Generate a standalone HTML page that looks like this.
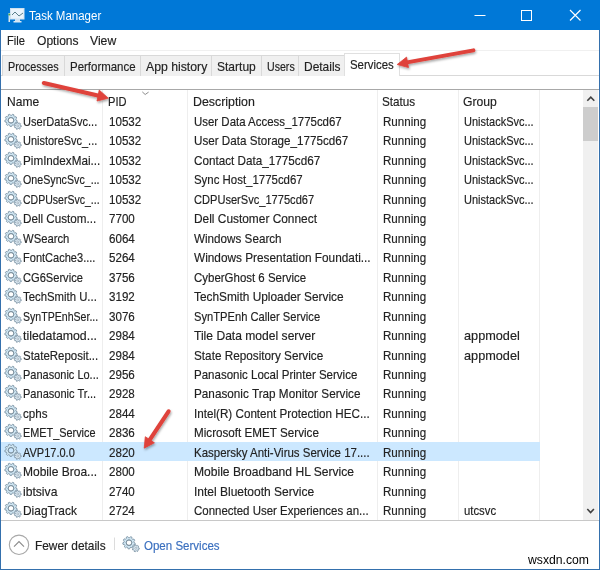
<!DOCTYPE html>
<html><head><meta charset="utf-8">
<style>
*{margin:0;padding:0;box-sizing:border-box}
html,body{width:600px;height:570px;overflow:hidden;background:#fff}
body{position:relative;font-family:"Liberation Sans",sans-serif;font-size:11.6px;color:#222}
.abs{position:absolute}
.t{display:inline-block;white-space:nowrap;line-height:13px;transform:scaleX(var(--sx,1)) scaleY(1.12);transform-origin:0 80%;-webkit-text-stroke:0.15px currentColor}
#title{position:absolute;left:0;top:0;width:600px;height:30px;background:#0078d7}
#ttl{position:absolute;left:29px;top:10px;color:#fff;font-size:11.5px;-webkit-text-stroke:0}
#bl{position:absolute;left:0;top:30px;width:1px;height:540px;background:#3470ad}
#br{position:absolute;left:599px;top:30px;width:1px;height:540px;background:#3470ad}
#bb{position:absolute;left:0;top:569px;width:600px;height:1px;background:#3470ad}
.menu{position:absolute;top:34.3px}
#mline{position:absolute;left:1px;top:50px;width:598px;height:1px;background:#f0f0f0}
.tab{position:absolute;top:55px;height:21px;background:#f0f0f0;border:1px solid #d9d9d9;border-bottom:none;line-height:13px;padding-left:5px;padding-top:3.6px}
.tab.sel{top:53px;height:23px;background:#fff;padding-top:4.1px;border-color:#e0e0e0}
#tline{position:absolute;left:1px;top:75px;width:598px;height:1px;background:#d9d9d9}
#hline{position:absolute;left:1px;top:89px;width:598px;height:1px;background:#a8a8a8}
.vsep{position:absolute;top:90px;width:1px;height:430px;background:#eeeeee}
.hd{position:absolute;top:95px}
.row{position:absolute;left:1px;width:539px;height:19.42px}
.row.sel{background:#cce8ff;height:18.8px}
.row .t{position:absolute}
.gi{position:absolute;left:2.3px;top:0.5px}
.c0{left:22px} .c1{left:108px} .c2{left:193px} .c3{left:382px} .c4{left:463px}
#sb{position:absolute;left:583px;top:90px;width:15px;height:430px;background:#f0f0f0}
#thumb{position:absolute;left:583px;top:107px;width:15px;height:34px;background:#cdcdcd}
#fline{position:absolute;left:1px;top:520px;width:598px;height:1px;background:#c8c8c8}
#wm{position:absolute;left:528px;top:554px;font-size:12.2px;color:#000;-webkit-text-stroke:0}
#ov{position:absolute;left:0;top:0}
</style></head><body>
<svg width="0" height="0" style="position:absolute">
<defs>
<g id="gear">
<path d="M13.00,7.15 L14.18,7.76 L13.87,9.28 L12.54,9.39 L11.93,10.40 L12.44,11.63 L11.22,12.60 L10.14,11.82 L9.02,12.20 L8.62,13.47 L7.07,13.43 L6.73,12.14 L5.63,11.70 L4.51,12.42 L3.35,11.40 L3.92,10.19 L3.36,9.15 L2.03,8.98 L1.80,7.45 L3.02,6.89 L3.25,5.73 L2.35,4.75 L3.16,3.43 L4.44,3.79 L5.37,3.05 L5.31,1.72 L6.78,1.22 L7.53,2.32 L8.72,2.35 L9.53,1.29 L10.97,1.86 L10.84,3.19 L11.73,3.97 L13.03,3.68 L13.77,5.04 L12.82,5.98Z M10.8,7.3 A2.8,2.8 0 1 0 5.2,7.3 A2.8,2.8 0 1 0 10.8,7.3Z" fill="#cfe6f3" fill-rule="evenodd" stroke="#7f95a6" stroke-width="0.9" stroke-linejoin="round"/>
<circle cx="8" cy="7.3" r="2.8" fill="none" stroke="#7d909c" stroke-width="0.9"/>
<path d="M17.35,12.39 L18.29,12.68 L18.18,13.81 L17.20,13.90 L16.79,14.58 L17.15,15.50 L16.20,16.11 L15.51,15.40 L14.73,15.50 L14.23,16.35 L13.17,15.99 L13.29,15.02 L12.72,14.46 L11.75,14.61 L11.36,13.55 L12.20,13.04 L12.28,12.25 L11.56,11.58 L12.15,10.62 L13.07,10.96 L13.74,10.53 L13.81,9.54 L14.93,9.40 L15.24,10.34 L15.99,10.59 L16.81,10.03 L17.62,10.82 L17.08,11.65Z" fill="#dceaf3" stroke="#7f95a6" stroke-width="0.9" stroke-linejoin="round"/>
<circle cx="14.8" cy="12.9" r="1" fill="#eef4f8" stroke="#8a9cab" stroke-width="0.6"/>
</g>
<filter id="sh" x="-20%" y="-20%" width="140%" height="140%"><feDropShadow dx="0.8" dy="1.6" stdDeviation="1.2" flood-color="#000" flood-opacity="0.35"/></filter>
</defs></svg>
<div id="title"></div>
<span class="t" id="ttl" style="">Task Manager</span><svg class="abs" style="left:0;top:0" width="600" height="30">
<rect x="10.5" y="8.5" width="13.5" height="10.5" fill="#e9f3fb" stroke="#cfe1ef" stroke-width="1"/>
<polyline points="12,15 15,12 19,16 23,13" fill="none" stroke="#5a7f8a" stroke-width="1"/>
<rect x="15" y="19" width="5" height="2" fill="#cfe3f3"/><rect x="13.5" y="21" width="8" height="1.5" fill="#dbe9f5"/>
<rect x="8.5" y="13" width="1.5" height="9" fill="#d9e6ef"/><circle cx="9.3" cy="14.6" r="1" fill="#4caa4a"/>
<line x1="474.5" y1="15.5" x2="485.5" y2="15.5" stroke="#fff" stroke-width="1"/>
<rect x="521.5" y="10.5" width="10" height="10" fill="none" stroke="#fff" stroke-width="1"/>
<path d="M570 10 L580.5 20.5 M580.5 10 L570 20.5" stroke="#fff" stroke-width="1.15"/>
</svg>
<div id="bl"></div><div id="br"></div><div id="bb"></div>
<div class="menu" style="left:7px"><span class="t" style=";--sx:0.963">File</span></div>
<div class="menu" style="left:37px"><span class="t" style=";--sx:1.041">Options</span></div>
<div class="menu" style="left:90px"><span class="t" style=";--sx:1.051">View</span></div>
<div id="mline"></div>
<div id="tline"></div>
<div class="tab" style="left:2px;width:63px"><span class="t" style=";--sx:0.935">Processes</span></div>
<div class="tab" style="left:64px;width:77px"><span class="t" style=";--sx:0.988">Performance</span></div>
<div class="tab" style="left:140px;width:72px"><span class="t" style=";--sx:1.057">App history</span></div>
<div class="tab" style="left:211px;width:51px"><span class="t" style=";--sx:1.038">Startup</span></div>
<div class="tab" style="left:261px;width:38px"><span class="t" style=";--sx:0.915">Users</span></div>
<div class="tab" style="left:298px;width:47px"><span class="t" style=";--sx:1.032">Details</span></div>
<div class="tab sel" style="left:344px;width:56px"><span class="t" style=";--sx:0.985">Services</span></div>
<div id="hline"></div>
<div class="vsep" style="left:102px"></div>
<div class="vsep" style="left:187px"></div>
<div class="vsep" style="left:377px"></div>
<div class="vsep" style="left:458px"></div>
<div class="vsep" style="left:539px"></div>
<div class="hd" style="left:7px"><span class="t" style=";--sx:1.038">Name</span></div>
<div class="hd" style="left:108px"><span class="t" style=";--sx:0.957">PID</span></div>
<div class="hd" style="left:193px"><span class="t" style=";--sx:1.067">Description</span></div>
<div class="hd" style="left:382px"><span class="t" style=";--sx:1.010">Status</span></div>
<div class="hd" style="left:463px"><span class="t" style=";--sx:1.049">Group</span></div>
<div class="row" style="top:112.00px"><svg class="gi" width="21" height="20"><use href="#gear"/></svg><span class="t c0" style="top:3.00px;--sx:0.952">UserDataSvc...</span><span class="t c1" style="top:3.00px">10532</span><span class="t c2" style="top:3.00px;--sx:0.988">User Data Access_1775cd67</span><span class="t c3" style="top:3.00px">Running</span><span class="t c4" style="top:3.00px;--sx:0.948">UnistackSvc...</span></div>
<div class="row" style="top:131.42px"><svg class="gi" width="21" height="20"><use href="#gear"/></svg><span class="t c0" style="top:3.04px;--sx:0.944">UnistoreSvc_...</span><span class="t c1" style="top:3.04px">10532</span><span class="t c2" style="top:3.04px;--sx:1.006">User Data Storage_1775cd67</span><span class="t c3" style="top:3.04px">Running</span><span class="t c4" style="top:3.04px;--sx:0.948">UnistackSvc...</span></div>
<div class="row" style="top:150.84px"><svg class="gi" width="21" height="20"><use href="#gear"/></svg><span class="t c0" style="top:3.08px;--sx:1.008">PimIndexMai...</span><span class="t c1" style="top:3.08px">10532</span><span class="t c2" style="top:3.08px;--sx:1.009">Contact Data_1775cd67</span><span class="t c3" style="top:3.08px">Running</span><span class="t c4" style="top:3.08px;--sx:0.948">UnistackSvc...</span></div>
<div class="row" style="top:170.26px"><svg class="gi" width="21" height="20"><use href="#gear"/></svg><span class="t c0" style="top:3.12px;--sx:0.921">OneSyncSvc_...</span><span class="t c1" style="top:3.12px">10532</span><span class="t c2" style="top:3.12px;--sx:0.986">Sync Host_1775cd67</span><span class="t c3" style="top:3.12px">Running</span><span class="t c4" style="top:3.12px;--sx:0.948">UnistackSvc...</span></div>
<div class="row" style="top:189.68px"><svg class="gi" width="21" height="20"><use href="#gear"/></svg><span class="t c0" style="top:3.16px;--sx:0.908">CDPUserSvc_...</span><span class="t c1" style="top:3.16px">10532</span><span class="t c2" style="top:3.16px;--sx:0.956">CDPUserSvc_1775cd67</span><span class="t c3" style="top:3.16px">Running</span><span class="t c4" style="top:3.16px;--sx:0.948">UnistackSvc...</span></div>
<div class="row" style="top:209.10px"><svg class="gi" width="21" height="20"><use href="#gear"/></svg><span class="t c0" style="top:3.20px;--sx:1.007">Dell Custom...</span><span class="t c1" style="top:3.20px">7700</span><span class="t c2" style="top:3.20px;--sx:1.026">Dell Customer Connect</span><span class="t c3" style="top:3.20px">Running</span></div>
<div class="row" style="top:228.52px"><svg class="gi" width="21" height="20"><use href="#gear"/></svg><span class="t c0" style="top:3.24px;--sx:0.973">WSearch</span><span class="t c1" style="top:3.24px">6064</span><span class="t c2" style="top:3.24px;--sx:1.007">Windows Search</span><span class="t c3" style="top:3.24px">Running</span></div>
<div class="row" style="top:247.94px"><svg class="gi" width="21" height="20"><use href="#gear"/></svg><span class="t c0" style="top:3.28px;--sx:0.952">FontCache3....</span><span class="t c1" style="top:3.28px">5264</span><span class="t c2" style="top:3.28px;--sx:1.019">Windows Presentation Foundati...</span><span class="t c3" style="top:3.28px">Running</span></div>
<div class="row" style="top:267.36px"><svg class="gi" width="21" height="20"><use href="#gear"/></svg><span class="t c0" style="top:3.32px;--sx:0.958">CG6Service</span><span class="t c1" style="top:3.32px">3756</span><span class="t c2" style="top:3.32px;--sx:0.989">CyberGhost 6 Service</span><span class="t c3" style="top:3.32px">Running</span></div>
<div class="row" style="top:286.78px"><svg class="gi" width="21" height="20"><use href="#gear"/></svg><span class="t c0" style="top:3.36px;--sx:0.979">TechSmith U...</span><span class="t c1" style="top:3.36px">3192</span><span class="t c2" style="top:3.36px;--sx:1.023">TechSmith Uploader Service</span><span class="t c3" style="top:3.36px">Running</span></div>
<div class="row" style="top:306.20px"><svg class="gi" width="21" height="20"><use href="#gear"/></svg><span class="t c0" style="top:3.40px;--sx:0.912">SynTPEnhSer...</span><span class="t c1" style="top:3.40px">3076</span><span class="t c2" style="top:3.40px;--sx:0.964">SynTPEnh Caller Service</span><span class="t c3" style="top:3.40px">Running</span></div>
<div class="row" style="top:325.62px"><svg class="gi" width="21" height="20"><use href="#gear"/></svg><span class="t c0" style="top:3.44px;--sx:1.063">tiledatamod...</span><span class="t c1" style="top:3.44px">2984</span><span class="t c2" style="top:3.44px;--sx:1.043">Tile Data model server</span><span class="t c3" style="top:3.44px">Running</span><span class="t c4" style="top:3.44px;--sx:1.096">appmodel</span></div>
<div class="row" style="top:345.04px"><svg class="gi" width="21" height="20"><use href="#gear"/></svg><span class="t c0" style="top:3.48px;--sx:0.989">StateReposit...</span><span class="t c1" style="top:3.48px">2984</span><span class="t c2" style="top:3.48px;--sx:1.013">State Repository Service</span><span class="t c3" style="top:3.48px">Running</span><span class="t c4" style="top:3.48px;--sx:1.096">appmodel</span></div>
<div class="row" style="top:364.46px"><svg class="gi" width="21" height="20"><use href="#gear"/></svg><span class="t c0" style="top:3.52px;--sx:0.948">Panasonic Lo...</span><span class="t c1" style="top:3.52px">2956</span><span class="t c2" style="top:3.52px;--sx:0.994">Panasonic Local Printer Service</span><span class="t c3" style="top:3.52px">Running</span></div>
<div class="row" style="top:383.88px"><svg class="gi" width="21" height="20"><use href="#gear"/></svg><span class="t c0" style="top:3.56px;--sx:0.953">Panasonic Tr...</span><span class="t c1" style="top:3.56px">2928</span><span class="t c2" style="top:3.56px;--sx:1.013">Panasonic Trap Monitor Service</span><span class="t c3" style="top:3.56px">Running</span></div>
<div class="row" style="top:403.30px"><svg class="gi" width="21" height="20"><use href="#gear"/></svg><span class="t c0" style="top:3.60px">cphs</span><span class="t c1" style="top:3.60px">2844</span><span class="t c2" style="top:3.60px;--sx:1.006">Intel(R) Content Protection HEC...</span><span class="t c3" style="top:3.60px">Running</span></div>
<div class="row" style="top:422.72px"><svg class="gi" width="21" height="20"><use href="#gear"/></svg><span class="t c0" style="top:3.64px;--sx:0.938">EMET_Service</span><span class="t c1" style="top:3.64px">2836</span><span class="t c2" style="top:3.64px;--sx:1.006">Microsoft EMET Service</span><span class="t c3" style="top:3.64px">Running</span></div>
<div class="row sel" style="top:442.14px"><svg class="gi" width="21" height="20"><use href="#gear"/></svg><span class="t c0" style="top:3.68px;--sx:0.949">AVP17.0.0</span><span class="t c1" style="top:3.68px">2820</span><span class="t c2" style="top:3.68px;--sx:0.989">Kaspersky Anti-Virus Service 17....</span><span class="t c3" style="top:3.68px">Running</span></div>
<div class="row" style="top:461.56px"><svg class="gi" width="21" height="20"><use href="#gear"/></svg><span class="t c0" style="top:3.72px;--sx:1.036">Mobile Broa...</span><span class="t c1" style="top:3.72px">2800</span><span class="t c2" style="top:3.72px;--sx:1.042">Mobile Broadband HL Service</span><span class="t c3" style="top:3.72px">Running</span></div>
<div class="row" style="top:480.98px"><svg class="gi" width="21" height="20"><use href="#gear"/></svg><span class="t c0" style="top:3.76px;--sx:1.046">ibtsiva</span><span class="t c1" style="top:3.76px">2740</span><span class="t c2" style="top:3.76px;--sx:1.035">Intel Bluetooth Service</span><span class="t c3" style="top:3.76px">Running</span></div>
<div class="row" style="top:500.40px"><svg class="gi" width="21" height="20"><use href="#gear"/></svg><span class="t c0" style="top:3.80px;--sx:1.029">DiagTrack</span><span class="t c1" style="top:3.80px">2724</span><span class="t c2" style="top:3.80px;--sx:0.989">Connected User Experiences an...</span><span class="t c3" style="top:3.80px">Running</span><span class="t c4" style="top:3.80px;--sx:0.977">utcsvc</span></div>
<div id="sb"></div><div id="thumb"></div>
<svg class="abs" style="left:0;top:0" width="600" height="570">
<polyline points="142.3,91.9 145.2,94.5 148.6,92.1" fill="none" stroke="#8c8c8c" stroke-width="1"/>
<polyline points="587.3,100.8 590.8,97.2 594.3,100.8" fill="none" stroke="#404040" stroke-width="1.6"/>
<polyline points="587.3,509 590.6,512.6 593.9,509" fill="none" stroke="#404040" stroke-width="1.6"/>
<circle cx="19" cy="544.8" r="9.7" fill="none" stroke="#a8a8a8" stroke-width="1.1"/>
<polyline points="14,546.6 19,541.6 24,546.6" fill="none" stroke="#8a8a8a" stroke-width="1.1"/>
<line x1="114.5" y1="537.5" x2="114.5" y2="550" stroke="#dcdcdc" stroke-width="1"/>
<use href="#gear" x="121" y="535.4"/>
</svg>
<div id="fline"></div>
<div class="abs" style="left:35px;top:539px"><span class="t" style=";--sx:1.024">Fewer details</span></div>
<div class="abs" style="left:144px;top:539px;color:#3a6fbf"><span class="t" style=";--sx:0.994">Open Services</span></div>
<span class="t" id="wm" style="">wsxdn.com</span>
<svg id="ov" width="600" height="570"><g filter="url(#sh)"><line x1="43.8" y1="83" x2="100.0" y2="96.0" stroke="#df423b" stroke-width="4.1" stroke-linecap="round"/><polygon points="108.3,98.2 99.2,90.1 97,101" fill="#df423b" stroke="#df423b" stroke-width="0.8" stroke-linejoin="round"/><line x1="473.5" y1="50.3" x2="405.6" y2="62.7" stroke="#df423b" stroke-width="3.9" stroke-linecap="round"/><polygon points="397.2,64.5 406.6,57.1 408.5,67.5" fill="#df423b" stroke="#df423b" stroke-width="0.8" stroke-linejoin="round"/><line x1="168.6" y1="411.3" x2="148.7" y2="441.4" stroke="#df423b" stroke-width="4.1" stroke-linecap="round"/><polygon points="144.2,448.2 145.3,436.7 154.4,442.8" fill="#df423b" stroke="#df423b" stroke-width="0.8" stroke-linejoin="round"/></g></svg>
</body></html>
